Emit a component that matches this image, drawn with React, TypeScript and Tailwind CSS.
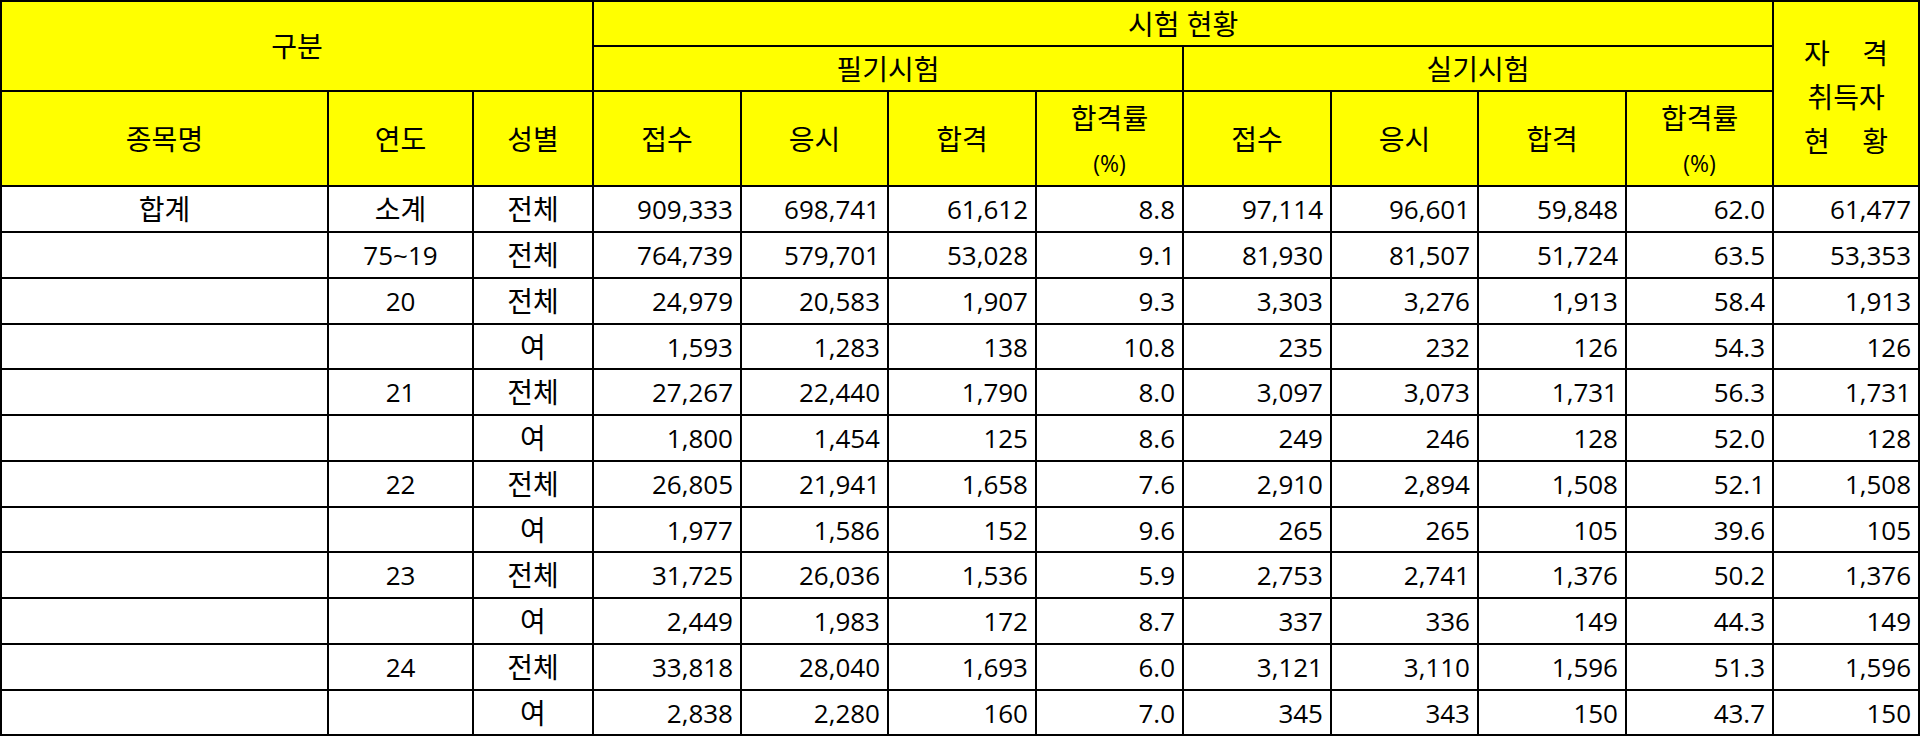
const rows: string[][] = [
  ["합계", "소계", "전체", "909,333", "698,741", "61,612", "8.8", "97,114", "96,601", "59,848", "62.0", "61,477"],
  ["", "75~19", "전체", "764,739", "579,701", "53,028", "9.1", "81,930", "81,507", "51,724", "63.5", "53,353"],
  ["", "20", "전체", "24,979", "20,583", "1,907", "9.3", "3,303", "3,276", "1,913", "58.4", "1,913"],
  ["", "", "여", "1,593", "1,283", "138", "10.8", "235", "232", "126", "54.3", "126"],
  ["", "21", "전체", "27,267", "22,440", "1,790", "8.0", "3,097", "3,073", "1,731", "56.3", "1,731"],
  ["", "", "여", "1,800", "1,454", "125", "8.6", "249", "246", "128", "52.0", "128"],
  ["", "22", "전체", "26,805", "21,941", "1,658", "7.6", "2,910", "2,894", "1,508", "52.1", "1,508"],
  ["", "", "여", "1,977", "1,586", "152", "9.6", "265", "265", "105", "39.6", "105"],
  ["", "23", "전체", "31,725", "26,036", "1,536", "5.9", "2,753", "2,741", "1,376", "50.2", "1,376"],
  ["", "", "여", "2,449", "1,983", "172", "8.7", "337", "336", "149", "44.3", "149"],
  ["", "24", "전체", "33,818", "28,040", "1,693", "6.0", "3,121", "3,110", "1,596", "51.3", "1,596"],
  ["", "", "여", "2,838", "2,280", "160", "7.0", "345", "343", "150", "43.7", "150"],
];

// row heights add up to 736 with the header
const rowHeights = ["h-[46px]", "h-[46px]", "h-[46px]", "h-[45px]"];

const cell = "p-0 border-r-2 border-b-2 border-black";
const head = `${cell} bg-[#ffff00] text-center align-middle font-normal text-[28px]`;

const hangul = /[가-힣]/;

const RateHead = () => (
  <th className={head}>
    <div className="pt-[4px] leading-[43px]">
      합격률
      <br />
      <span className="text-[23px]">(%)</span>
    </div>
  </th>
);

export default function App() {
  return (
    <div className="w-[1920px] h-[736px] overflow-hidden bg-white text-black text-[26px] font-['Open_Sans','Noto_Sans_CJK_KR',sans-serif]">
      <div className="border-l-2 border-t-2 border-black">
        <table className="table-fixed border-separate border-spacing-0 w-[1918px]">
          <colgroup>
            <col className="w-[327px]" />
            <col className="w-[145px]" />
            <col className="w-[120px]" />
            <col className="w-[148px]" />
            <col className="w-[147px]" />
            <col className="w-[148px]" />
            <col className="w-[147px]" />
            <col className="w-[148px]" />
            <col className="w-[147px]" />
            <col className="w-[148px]" />
            <col className="w-[147px]" />
            <col className="w-[146px]" />
          </colgroup>
          <thead>
            <tr className="h-[45px]">
              <th colSpan={3} rowSpan={2} className={head}>구분</th>
              <th colSpan={8} className={head}>시험 현황</th>
              <th rowSpan={3} className={head}>
                <div className="mx-auto w-[84px] pt-[6px] leading-[44px]">
                  <div className="flex justify-between"><span>자</span><span>격</span></div>
                  <div>취득자</div>
                  <div className="flex justify-between"><span>현</span><span>황</span></div>
                </div>
              </th>
            </tr>
            <tr className="h-[45px]">
              <th colSpan={4} className={head}>필기시험</th>
              <th colSpan={4} className={head}>실기시험</th>
            </tr>
            <tr className="h-[95px]">
              <th className={head}>종목명</th>
              <th className={head}>연도</th>
              <th className={head}>성별</th>
              <th className={head}>접수</th>
              <th className={head}>응시</th>
              <th className={head}>합격</th>
              <RateHead />
              <th className={head}>접수</th>
              <th className={head}>응시</th>
              <th className={head}>합격</th>
              <RateHead />
            </tr>
          </thead>
          <tbody>
            {rows.map((r, i) => (
              <tr key={i} className={rowHeights[i % 4]}>
                {r.map((v, j) => (
                  <td
                    key={j}
                    className={`${cell} align-middle leading-none ${hangul.test(v) ? "text-[28px]" : ""} ${j < 3 ? "text-center" : "text-right pr-[7px]"}`}
                  >
                    {v}
                  </td>
                ))}
              </tr>
            ))}
          </tbody>
        </table>
      </div>
    </div>
  );
}
